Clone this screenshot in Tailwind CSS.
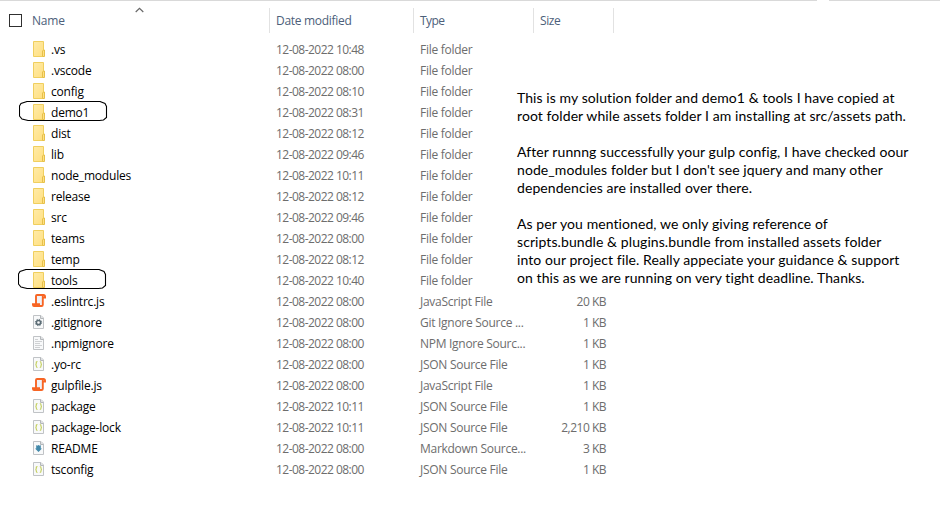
<!DOCTYPE html>
<html lang="en">
<head>
<meta charset="utf-8">
<title>Solution folder</title>
<script src="https://cdn.jsdelivr.net/npm/@tailwindcss/browser@4"></script>
</head>
<body class="relative h-[526px] w-[940px] overflow-hidden bg-white font-['Open_Sans','Noto_Sans',sans-serif] text-[12px] text-black">
<svg class="absolute size-0">
  <defs>
    <linearGradient id="fold" x1="0" y1="0" x2="1" y2="1"><stop offset="0" stop-color="#ffeba8"/><stop offset="1" stop-color="#ffdf80"/></linearGradient>
  </defs>
  <symbol id="folder" viewBox="0 0 16 18">
    <path d="M2.500 1.500h10v15h-10z" fill="url(#fold)" stroke="#f0cf5e"/>
    <path d="M11.500 16.500v-5.500l1-1h1v6.500z" fill="#ffe084" stroke="#e6c04a"/>
  </symbol>
  <symbol id="page" viewBox="0 0 16 18">
    <path d="M2.500 2.500h7.500l2.500 2.500v10.500h-10z" fill="#f8f9fa" stroke="#c0c3c6"/>
    <path d="M9.500 2.500v3h3" fill="#dfe1e3" stroke="#b4b7ba"/>
  </symbol>
  <symbol id="js" viewBox="0 0 16 18">
    <path d="M5 3h7v10H5z" fill="#eff1f7"/>
    <path d="M14 6V4.300C14 3.500 13.500 3 12.700 3H6C5.300 3 5 3.400 5 4v8M2 12v1c0 .7.400 1 1 1h7.500c.8 0 1.300-.5 1.300-1.300V3.500" fill="none" stroke="#f76524" stroke-width="1.900"/>
    <path d="M1 11.300h8v1.700H1zM12 5h3v1.600h-3z" fill="#f76524"/>
  </symbol>
  <symbol id="gear" viewBox="0 0 16 18">
    <use href="#page"/>
    <circle cx="7.500" cy="9.500" r="2.100" fill="none" stroke="#5a6b74" stroke-width="1.500"/>
    <circle cx="7.500" cy="9.500" r="3.200" fill="none" stroke="#5a6b74" stroke-width="1" stroke-dasharray="1.250 1.263"/>
  </symbol>
  <symbol id="text" viewBox="0 0 16 18">
    <use href="#page"/>
    <path d="M4 5.500h3M4 7.500h7M4 9.500h5M4 11.500h7M4 13.500h5" stroke="#cfd1d3"/>
  </symbol>
  <symbol id="json" viewBox="0 0 16 18">
    <use href="#page"/>
    <path d="M6.500 6.500c-1.200 0-1.200.5-1.200 1.500s0 1.300-.8 1.500c.8.200.8.500.8 1.500s0 1.500 1.200 1.500M8.800 6.500c1.200 0 1.200.5 1.200 1.500s0 1.300.8 1.500c-.8.200-.8.500-.8 1.500s0 1.500-1.200 1.500" fill="none" stroke="#c5d060" stroke-width="1.200"/>
  </symbol>
  <symbol id="md" viewBox="0 0 16 18">
    <use href="#page"/>
    <path d="M5.200 6l1 .8L7.500 6l1.300.8 1-.8v3.500h1.200L7.500 13 4 9.500h1.200z" fill="#4389aa"/>
  </symbol>
</svg>

<div class="flex h-px gap-[12px]">
  <div class="w-[817px] bg-[#d9d9d9]"></div>
  <div class="flex-1 bg-[#d9d9d9]"></div>
</div>

<header class="mt-[7px] flex h-[25px] items-center text-[#4c607a]">
  <div class="flex h-full w-[270px] items-center border-r border-[#e2e2e2] pl-[9px]">
    <span class="size-[13px] border border-[#303030]"></span>
    <span class="ml-[10px] tracking-[-0.2px]">Name</span>
  </div>
  <div class="flex h-full w-[144px] items-center border-r border-[#e2e2e2] pl-[6px] tracking-[-0.3px]">Date modified</div>
  <div class="flex h-full w-[120px] items-center border-r border-[#e2e2e2] pl-[6px] tracking-[-0.6px]">Type</div>
  <div class="flex h-full w-[80px] items-center border-r border-[#e2e2e2] pl-[6px] tracking-[-0.4px]">Size</div>
</header>

<main id="files" class="mt-[6px] w-[614px]"></main>

<svg class="absolute left-[135px] top-[7px] h-[6px] w-[9px]" viewBox="0 0 9 6"><path d="M.7 5l3.800-3.700L8.300 5" fill="none" stroke="#686868" stroke-width="1.200"/></svg>

<svg class="absolute left-[19px] top-[101px] h-[21px] w-[89px]" viewBox="0 0 89 21"><path d="M8 .5h73l5 2 1.500 3v11l-3 2.500-4 .5H9l-6-1.500L.5 15V5L2 2.500z" fill="none" stroke="#000" stroke-width="1.100"/></svg>
<svg class="absolute left-[18px] top-[269px] h-[21px] w-[89px]" viewBox="0 0 89 21"><path d="M8 .5h73l5 2 1.500 3v11l-3 2.500-4 .5H9l-6-1.500L.5 15V5L2 2.500z" fill="none" stroke="#000" stroke-width="1.100"/></svg>

<aside class="absolute left-[517px] top-[89px] whitespace-nowrap font-[Lato,sans-serif] text-[14px] leading-[18px] tracking-[0.08px] [font-variant-ligatures:none]">
  <p>This is my solution folder and demo1 &amp; tools I have copied at<br>root folder while assets folder I am installing at src/assets path.</p>
  <p class="mt-[18px]">After runnng successfully your gulp config, I have checked oour<br>node_modules folder but I don't see jquery and many other<br>dependencies are installed over there.</p>
  <p class="mt-[18px]">As per you mentioned, we only giving reference of<br>scripts.bundle &amp; plugins.bundle from installed assets folder<br>into our project file. Really appeciate your guidance &amp; support<br>on this as we are running on very tight deadline. Thanks.</p>
</aside>

<script>
const rows = [
  ['folder', '.vs', '10:48', 'File folder', ''],
  ['folder', '.vscode', '08:00', 'File folder', ''],
  ['folder', 'config', '08:10', 'File folder', ''],
  ['folder', 'demo1', '08:31', 'File folder', ''],
  ['folder', 'dist', '08:12', 'File folder', ''],
  ['folder', 'lib', '09:46', 'File folder', ''],
  ['folder', 'node_modules', '10:11', 'File folder', ''],
  ['folder', 'release', '08:12', 'File folder', ''],
  ['folder', 'src', '09:46', 'File folder', ''],
  ['folder', 'teams', '08:00', 'File folder', ''],
  ['folder', 'temp', '08:12', 'File folder', ''],
  ['folder', 'tools', '10:40', 'File folder', ''],
  ['js', '.eslintrc.js', '08:00', 'JavaScript File', '20 KB'],
  ['gear', '.gitignore', '08:00', 'Git Ignore Source ...', '1 KB'],
  ['text', '.npmignore', '08:00', 'NPM Ignore Sourc...', '1 KB'],
  ['json', '.yo-rc', '08:00', 'JSON Source File', '1 KB'],
  ['js', 'gulpfile.js', '08:00', 'JavaScript File', '1 KB'],
  ['json', 'package', '10:11', 'JSON Source File', '1 KB'],
  ['json', 'package-lock', '10:11', 'JSON Source File', '2,210 KB'],
  ['md', 'README', '08:00', 'Markdown Source...', '3 KB'],
  ['json', 'tsconfig', '08:00', 'JSON Source File', '1 KB'],
];
document.getElementById('files').innerHTML = rows.map(([icon, name, time, type, size]) => `
  <div class="flex h-[21px] items-center whitespace-nowrap pl-[31px] text-[#6d6d6d]">
    <svg class="mt-px h-[18px] w-[16px] shrink-0 self-start"><use href="#${icon}"/></svg>
    <span class="ml-[4px] w-[225px] text-black tracking-[-0.2px]">${name}</span>
    <span class="w-[144px] tracking-[-0.53px]">12-08-2022 ${time}</span>
    <span class="w-[106px] tracking-[-0.28px]">${type}</span>
    <span class="w-[80px] text-right tracking-[-0.5px]">${size}</span>
  </div>`).join('');
</script>
</body>
</html>
